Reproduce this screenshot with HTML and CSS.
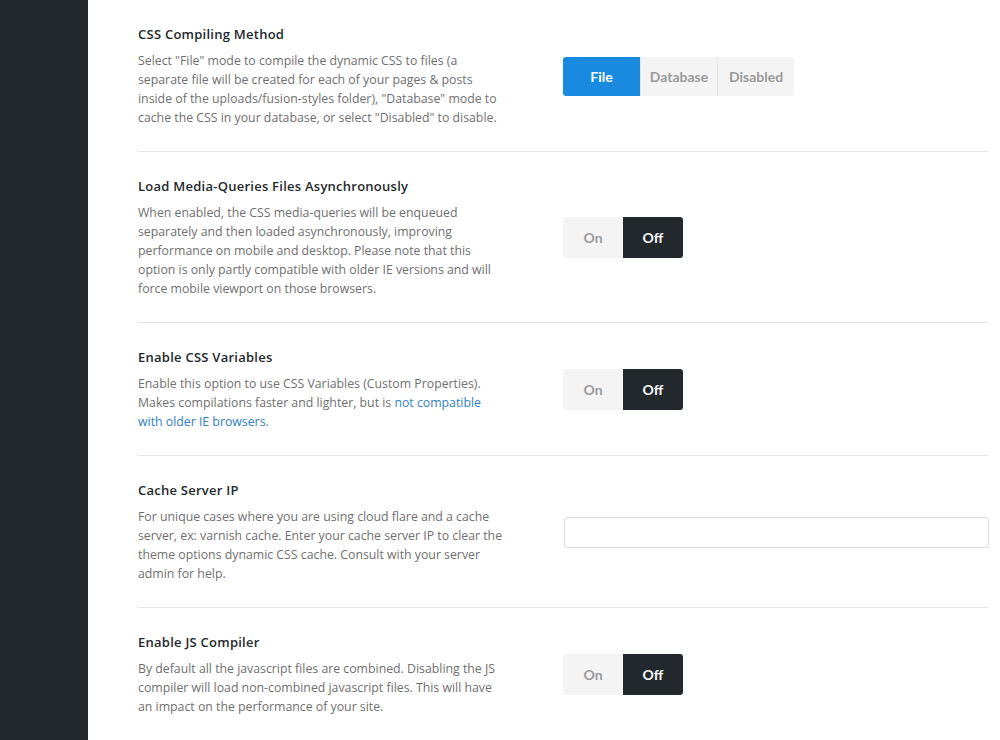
FILE: index.html
```html
<!DOCTYPE html>
<html lang="en">
<head>
  <meta charset="UTF-8" />
  <title>Performance Options</title>
  <link rel="stylesheet" href="styles.css">
</head>
<body>
  <aside class="sidebar"></aside>

  <main class="options">
    <div class="option">
      <div class="option-info">
        <h3>CSS Compiling Method</h3>
        <p>Select "File" mode to compile the dynamic CSS to files (a separate file will be created for each of your pages &amp; posts inside of the uploads/fusion-styles folder), "Database" mode to cache the CSS in your database, or select "Disabled" to disable.</p>
      </div>
      <div class="option-control">
        <div class="btnset">
          <a class="btn selected">File</a>
          <a class="btn">Database</a>
          <a class="btn">Disabled</a>
        </div>
      </div>
    </div>

    <div class="option">
      <div class="option-info">
        <h3>Load Media-Queries Files Asynchronously</h3>
        <p>When enabled, the CSS media-queries will be enqueued separately and then loaded asynchronously, improving performance on mobile and desktop. Please note that this option is only partly compatible with older IE versions and will force mobile viewport on those browsers.</p>
      </div>
      <div class="option-control">
        <div class="switch">
          <a class="sw">On</a>
          <a class="sw off">Off</a>
        </div>
      </div>
    </div>

    <div class="option">
      <div class="option-info">
        <h3>Enable CSS Variables</h3>
        <p>Enable this option to use CSS Variables (Custom Properties). Makes compilations faster and lighter, but is <a href="#">not compatible with older IE browsers</a>.</p>
      </div>
      <div class="option-control">
        <div class="switch">
          <a class="sw">On</a>
          <a class="sw off">Off</a>
        </div>
      </div>
    </div>

    <div class="option">
      <div class="option-info">
        <h3>Cache Server IP</h3>
        <p>For unique cases where you are using cloud flare and a cache server, ex: varnish cache. Enter your cache server IP to clear the theme options dynamic CSS cache. Consult with your server admin for help.</p>
      </div>
      <div class="option-control">
        <input type="text" class="text-input">
      </div>
    </div>

    <div class="option">
      <div class="option-info">
        <h3>Enable JS Compiler</h3>
        <p>By default all the javascript files are combined. Disabling the JS compiler will load non-combined javascript files. This will have an impact on the performance of your site.</p>
      </div>
      <div class="option-control">
        <div class="switch">
          <a class="sw">On</a>
          <a class="sw off">Off</a>
        </div>
      </div>
    </div>
  </main>
</body>
</html>
```

FILE: styles.css
```css
:root {
  --dark: #23282d;
  --blue: #1a8ae0;
  --line: #e5e5e5;
  --text: #6f6f6f;
}

* {
  box-sizing: border-box;
  margin: 0;
  padding: 0;
}

body {
  font-family: 'Open Sans', sans-serif;
  background: #fff;
  display: flex;
  min-height: 740px;
}

.sidebar {
  width: 88px;
  flex-shrink: 0;
  background: var(--dark);
}

.options {
  flex: 1;
  padding: 0 12px 0 50px;
}

.option {
  display: flex;
  align-items: center;
  padding: 25px 0 24px;
  border-bottom: 1px solid var(--line);
}

.option:last-child {
  border-bottom: none;
}

.option-info {
  width: 367px;
  flex-shrink: 0;
}

.option-info h3 {
  font-size: 13px;
  font-weight: 600;
  letter-spacing: 0.25px;
  line-height: 19px;
  color: #23282d;
  margin-bottom: 7px;
}

.option-info p {
  font-size: 12.3px;
  line-height: 19px;
  color: var(--text);
}

.option-info a {
  color: #2f7fc4;
  text-decoration: none;
}

.option-control {
  flex: 1;
  padding-left: 58px;
}

.btnset, .switch {
  display: inline-flex;
  border-radius: 3px;
  overflow: hidden;
  font-family: Lato, sans-serif;
  font-weight: 700;
  font-size: 14px;
}

.btn {
  width: 77px;
  height: 39px;
  line-height: 39px;
  text-align: center;
  background: #f4f4f4;
  color: #9a9a9a;
}

.btn + .btn {
  border-left: 1px solid #e4e4e4;
}

.btn.selected {
  background: var(--blue);
  color: #fff;
}

.sw {
  width: 60px;
  height: 41px;
  line-height: 41px;
  text-align: center;
  background: #f4f4f4;
  color: #9a9a9a;
}

.sw.off {
  background: var(--dark);
  color: #fff;
}

.text-input {
  display: block;
  width: 100%;
  height: 31px;
  margin-left: 1px;
  border: 1px solid #dcdcdc;
  border-radius: 3px;
  background: #fff;
}
```
